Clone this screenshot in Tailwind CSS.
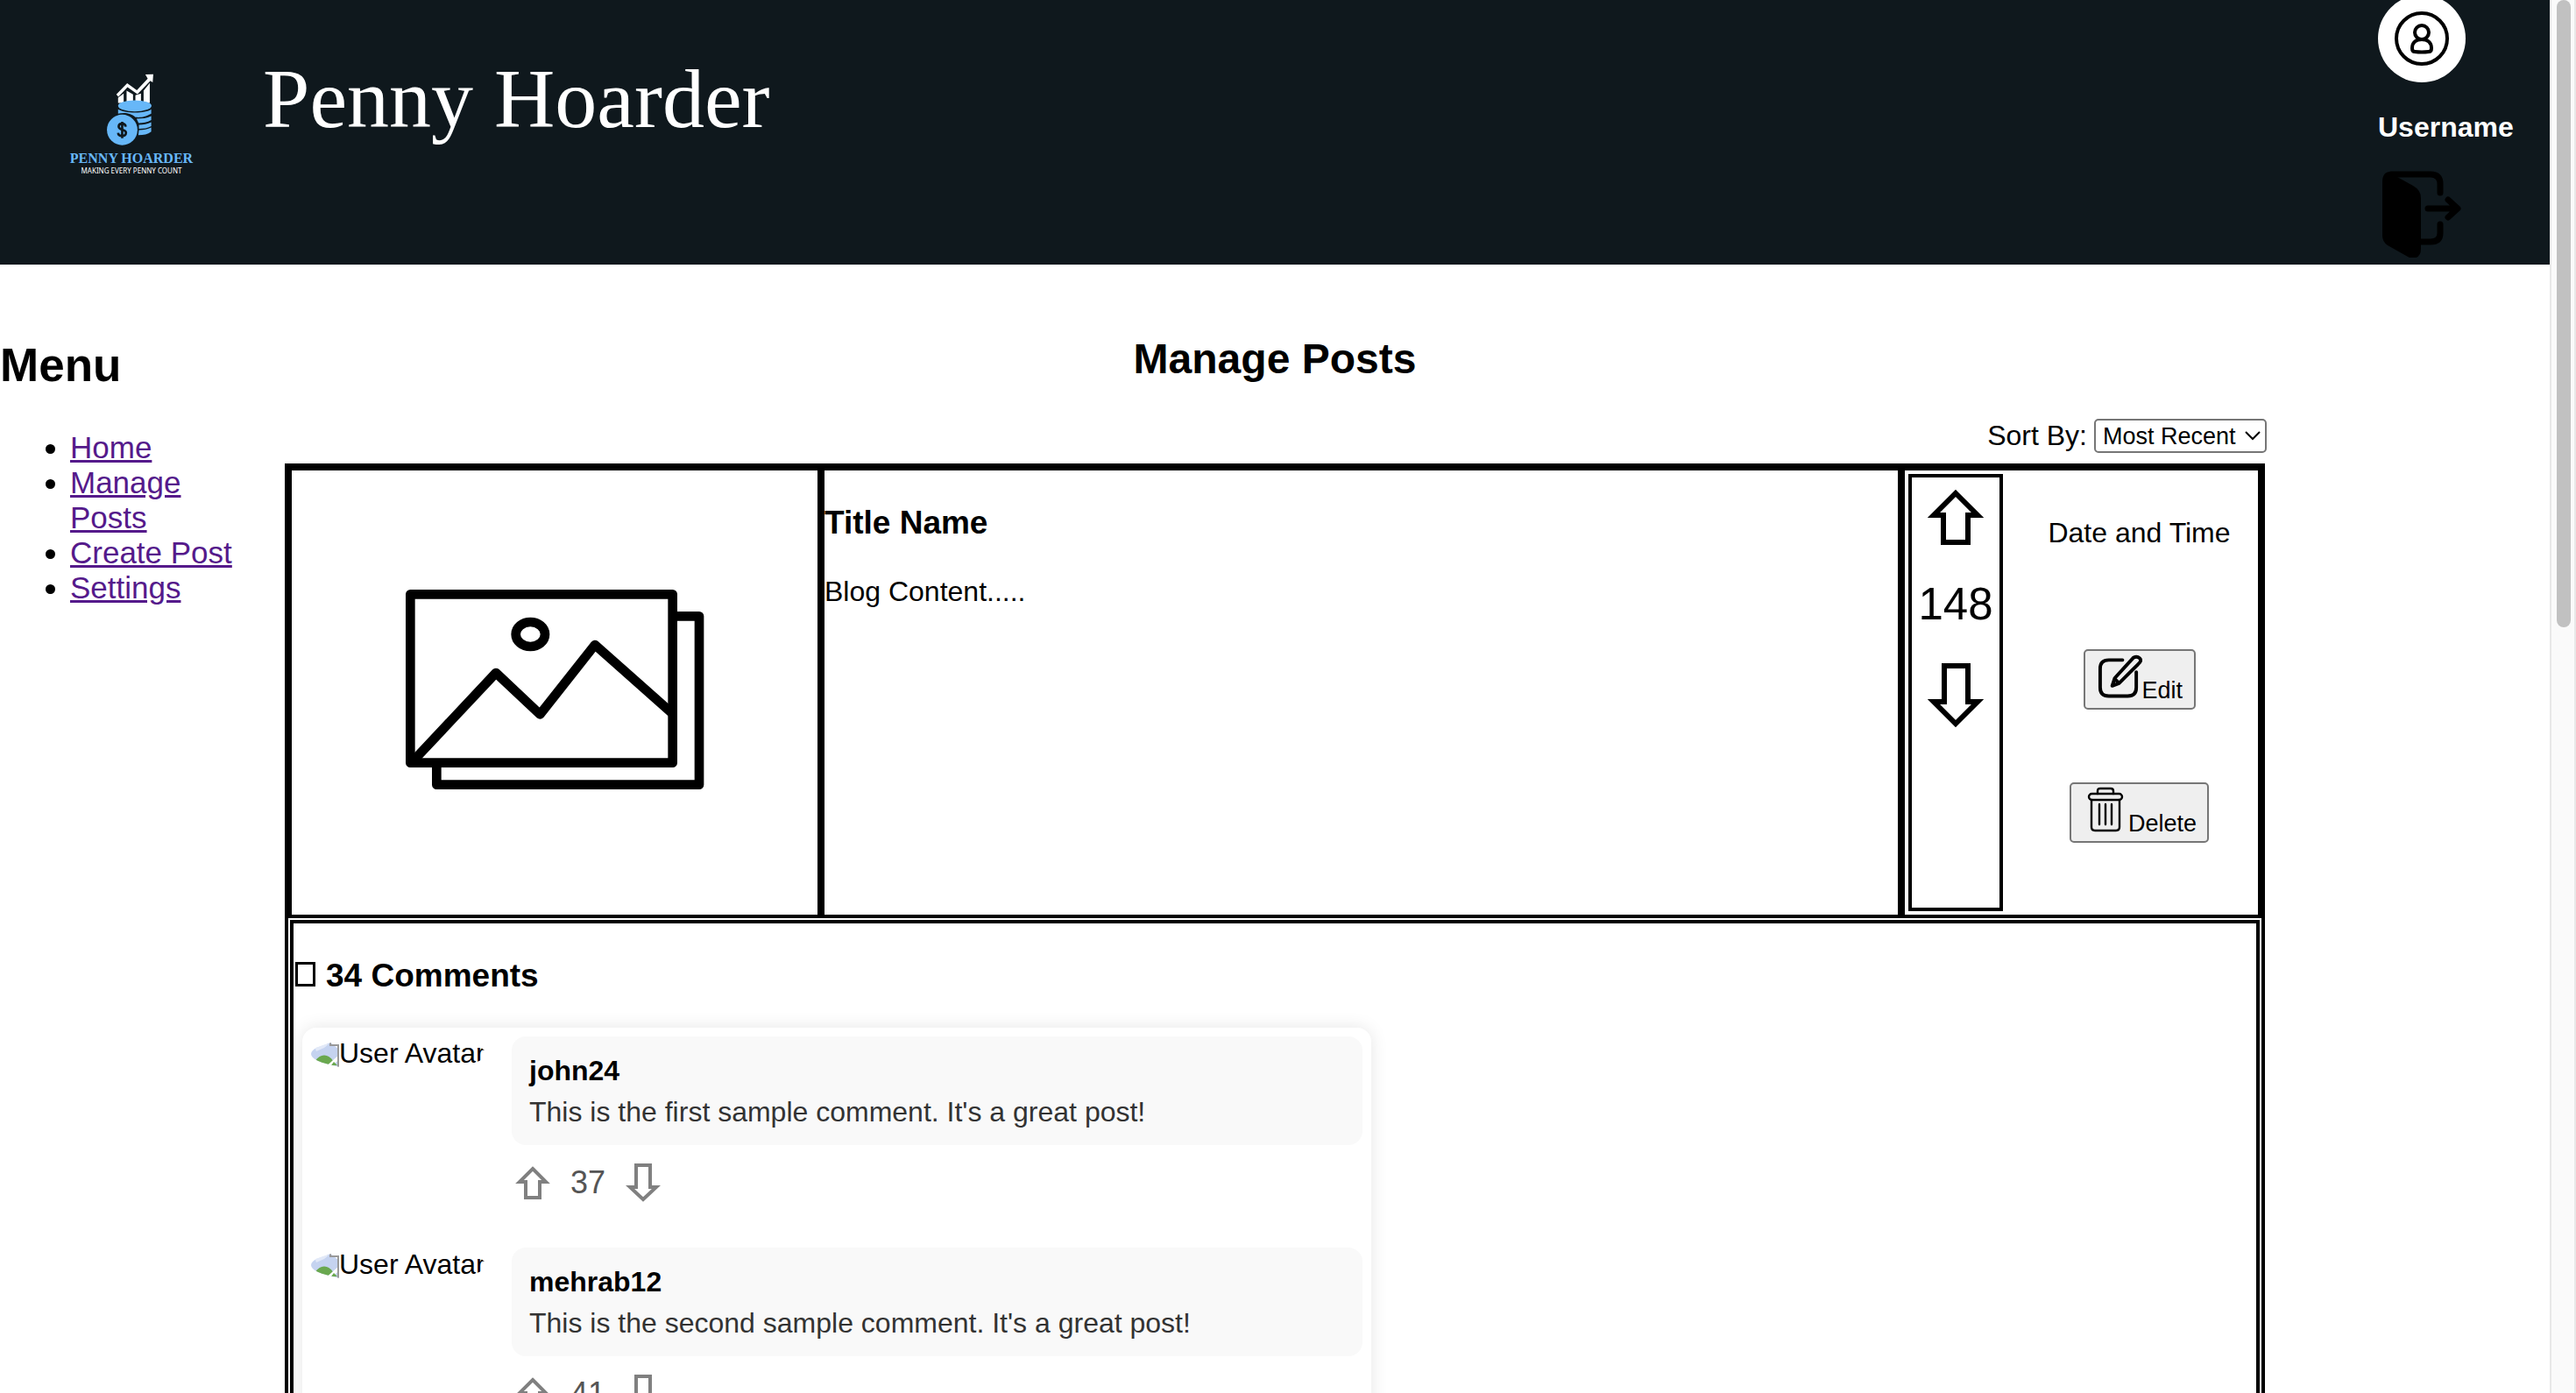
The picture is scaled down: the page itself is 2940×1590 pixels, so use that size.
<!DOCTYPE html>
<html lang="en">
<head>
<meta charset="utf-8">
<title>Penny Hoarder</title>
<script src="https://cdn.jsdelivr.net/npm/@tailwindcss/browser@4"></script>
</head>
<body class="flex h-screen overflow-hidden bg-white font-['Liberation_Sans',Arial,sans-serif] text-[32px] leading-[37px] text-black">
<svg class="hidden" aria-hidden="true">
  <symbol id="photo" viewBox="0 0 32 32">
    <path d="M0 3H22L31 10V31H0Z" fill="#c5d3f0"/>
    <path d="M3 5H20L15 9 6 13Z" fill="#fff" opacity=".5"/>
    <path d="M3 28C8 14 22 14 27 28Z" fill="#6aa84f"/>
    <path d="M15 32 32 17v5L22 32Z" fill="#fff"/>
    <path d="M22 3V6H31V31" fill="none" stroke="#999" stroke-width="2"/>
    <path d="M23 29l3-4 4 4Z" fill="#6aa84f"/>
  </symbol>
</svg>
<div class="min-w-0 flex-1 overflow-hidden">
  <header class="flex h-[302px] items-start bg-[#0f181d] text-white">
    <a href="#" class="flex w-[300px] flex-col items-center pt-[84px]">
      <svg class="mr-1 h-[82px] w-[53px]" viewBox="244 100 158 245" aria-hidden="true">
        <g fill="#fff">
          <path d="M282 182 301 168V200H282ZM311 158 333 171V200H311ZM341 174 360 168V200H341ZM369 158 390 132V200H369Z"/>
          <path d="M375 103 402 102 400 130 392 125 348 170 314 146 283 179 276 171 313 133 346 157 383 117Z"/>
        </g>
        <g fill="#67b7f8">
          <ellipse cx="339" cy="210" rx="57" ry="19"/>
          <path d="M282 222c20 14 92 16 113 0v15c-22 12-34 13-54 12-12-14-40-18-59-12Z"/>
          <path d="M345 254c18 0 36-2 50-9v13c-14 8-28 10-43 11ZM353 275c15 0 30-3 42-9v13c-14 7-26 9-42 9ZM353 293c15 0 30-3 42-9v14c-12 9-26 12-44 12Z"/>
          <circle cx="296" cy="292" r="52"/>
        </g>
        <path d="M308 281c-2-14-24-13-24 0 0 13 25 8 25 21 0 15-26 14-27 0M296 264v56" fill="none" stroke="#0f181d" stroke-width="8"/>
      </svg>
      <span class="mt-[6px] font-['Liberation_Serif',serif] text-[16px] leading-[18px] font-bold text-[#67b7f8]">PENNY HOARDER</span>
      <span class="font-['Noto_Sans',sans-serif] text-[8px] leading-[9px]">MAKING EVERY PENNY COUNT</span>
    </a>
    <h1 class="pt-[58px] font-['Liberation_Serif','Times_New_Roman',serif] text-[96px] leading-[110px]">Penny Hoarder</h1>
    <div class="ml-auto flex w-[196px] flex-col items-start">
      <svg class="-mt-[6px] size-[100px]" viewBox="0 0 100 100" fill="none" stroke="#000" stroke-width="4" aria-label="Profile">
        <circle cx="50" cy="50" r="50" fill="#fff" stroke="none"/>
        <circle cx="50" cy="50" r="29"/>
        <circle cx="50" cy="43" r="8"/>
        <path d="M39 61c0-6 4-10 11-10s11 4 11 10c0 3-1 4-3 4q-8 1-16 0c-2 0-3-1-3-4Z"/>
      </svg>
      <p class="mt-[33px] font-bold">Username</p>
      <button class="mt-7" aria-label="Log out">
        <svg class="block h-[102px] w-[100px]" viewBox="0 0 100 102" fill="none" stroke="#000" stroke-width="7" stroke-linecap="round" stroke-linejoin="round">
          <path d="M15 7H60Q71 7 71 18V28M71 64V74Q71 84 60 84H46M57 46H88M80 36 91 46 80 56"/>
          <path d="M5 16Q5 4 14 4L22 10 40 20Q49 25 49 34V92Q49 103 38 103L34 101 11 88Q5 84 5 77Z" fill="#000" stroke="none"/>
        </svg>
      </button>
    </div>
  </header>

  <div class="grid grid-cols-[325px_minmax(0,1fr)_325px]">
    <nav class="pt-[85px]">
      <h2 class="text-[53px] leading-[60px] font-bold">Menu</h2>
      <ul class="mt-11 list-disc pr-[50px] pl-20 text-[35px] leading-[40px]">
        <li><a href="#" class="text-[#551a8b] underline">Home</a></li>
        <li><a href="#" class="text-[#551a8b] underline">Manage Posts</a></li>
        <li><a href="#" class="text-[#551a8b] underline">Create Post</a></li>
        <li><a href="#" class="text-[#551a8b] underline">Settings</a></li>
      </ul>
    </nav>

    <main class="pt-20">
      <h2 class="text-center text-[48px] leading-[56px] font-bold">Manage Posts</h2>
      <div class="-mr-[2px] mt-10 mb-3 flex items-center justify-end gap-2">
        <label for="sort">Sort By:</label>
        <span class="relative flex">
          <select id="sort" class="h-[39px] w-[197px] appearance-none rounded-[5px] border-2 border-[#767676] bg-white pl-2 text-[27px] leading-[30px]"><option>Most Recent</option><option>Oldest</option></select>
          <svg class="pointer-events-none absolute top-[13px] right-[7px] h-3 w-[18px]" viewBox="0 0 18 12" fill="none" stroke="#000" stroke-width="2"><path d="M1 2 9 10 17 2"/></svg>
        </span>
      </div>

      <article class="border-4 border-black">
        <div class="grid h-[515px] grid-cols-[608px_minmax(0,1fr)_411px]">
          <div class="flex items-center justify-center border-4 border-r-0 border-black pr-1 pb-2">
            <svg class="h-[228px] w-[342px]" viewBox="126 99 1026 684" fill="none" stroke="#000" aria-label="Post image">
              <g stroke-width="32" stroke-linejoin="round">
                <path d="M1045 190H1134V767H235V692"/>
                <path d="M145 115H1043V692H145Z"/>
                <path d="M160 680 438 384 589 526 777 288 1040 521"/>
              </g>
              <ellipse cx="556" cy="252" rx="50" ry="42" stroke-width="32"/>
            </svg>
          </div>
          <div class="-ml-1 border-y-4 border-r-4 border-l-8 border-black pt-[38px]">
            <h3 class="text-[37px] leading-[43px] font-bold">Title Name</h3>
            <p class="mt-[39px]">Blog Content.....</p>
          </div>
          <div class="flex border-4 border-black">
            <div class="my-1 ml-1 flex w-[108px] shrink-0 flex-col items-center border-4 border-black pt-[14px]">
              <button aria-label="Upvote post"><svg class="block h-[63px] w-[66px]" viewBox="0 0 66 63" fill="none" stroke="#000" stroke-width="6"><path d="M33 4 58 29H47V60H19V29H8Z"/></svg></button>
              <span class="mt-[38px] text-[51px] leading-[60px]">148</span>
              <button aria-label="Downvote post" class="mt-[37px]"><svg class="block h-[73px] w-[66px]" viewBox="0 0 66 73" fill="none" stroke="#000" stroke-width="6"><path d="M33 69 58 44H47V3H20V44H8Z"/></svg></button>
            </div>
            <div class="flex flex-1 flex-col items-center pt-[53px] pl-5">
              <p>Date and Time</p>
              <button class="mt-[114px] flex h-[69px] w-[128px] items-end rounded-[5px] border-2 border-[#767676] bg-[#efefef] pb-1 pl-[13px] text-[27px] leading-[31px]">
                <svg class="mb-[6px] h-[52px] w-[52px] shrink-0" viewBox="0 0 53 52" fill="none" stroke="#000" stroke-width="4" stroke-linecap="round" stroke-linejoin="round"><path d="M30 7H14Q4 7 4 17V39Q4 49 14 49H36Q46 49 46 39V21"/><path d="M18 37 21 28 43 4Q47 2 50 5T48 12L26 34ZM21 29 26 34"/></svg>
                <span>Edit</span>
              </button>
              <button class="mt-[83px] flex h-[69px] w-[159px] items-end rounded-[5px] border-2 border-[#767676] bg-[#efefef] pb-1 pl-[17px] text-[27px] leading-[31px]">
                <svg class="mb-[6px] h-[52px] w-[48px] shrink-0" viewBox="0 0 48 52" fill="none" stroke="#000" stroke-width="2.4" stroke-linecap="round" stroke-linejoin="round"><rect x="3" y="8" width="38" height="7" rx="3.500"/><path d="M13 8V5Q13 2 16 2H28Q31 2 31 5V8M6 15V46Q6 50 10 50H34Q38 50 38 46V15M15 20V43M22 20V43M29 20V43"/></svg>
                <span>Delete</span>
              </button>
            </div>
          </div>
        </div>

        <section class="m-[2px] border-4 border-black">
          <h3 class="flex items-baseline gap-3 pt-[38px] pl-[2px] text-[37px] leading-[43px] font-bold"><span class="h-[28px] w-[23px] border-3 border-black" aria-hidden="true"></span>34 Comments</h3>
          <div class="mx-[10px] mt-[38px] mb-10 w-[1220px] rounded-2xl bg-white p-[10px] shadow-[0_0_20px_rgba(0,0,0,0.1)]">
            <div class="flex h-[241px] items-start">
              <div class="flex h-[40px] w-[200px] shrink-0 items-start overflow-hidden rounded-[50%] leading-[39px] whitespace-nowrap"><svg class="mt-1 size-8 shrink-0"><use href="#photo"/></svg>User Avatar</div>
              <div class="ml-[29px] flex-1">
                <div class="flex flex-col gap-[10px] rounded-2xl bg-[#f9f9f9] px-5 pt-[21px] pb-[19px]"><strong>john24</strong><p class="text-[#333]">This is the first sample comment. It's a great post!</p></div>
                <div class="mt-[19px] flex h-12 items-center gap-6 pl-1 text-[36px] leading-[44px] text-[#555]">
                  <button aria-label="Upvote comment"><svg class="block h-[38px] w-10" viewBox="0 0 40 38" fill="none" stroke="#808080" stroke-width="4"><path d="M20 3 35 18H28V36H12V18H5Z"/></svg></button>
                  <span class="-mx-px">37</span>
                  <button aria-label="Downvote comment"><svg class="block h-11 w-10" viewBox="0 0 40 44" fill="none" stroke="#808080" stroke-width="4"><path d="M20 41 35 27H28V2H12V27H5Z"/></svg></button>
                </div>
              </div>
            </div>
            <div class="flex h-[241px] items-start">
              <div class="flex h-[40px] w-[200px] shrink-0 items-start overflow-hidden rounded-[50%] leading-[39px] whitespace-nowrap"><svg class="mt-1 size-8 shrink-0"><use href="#photo"/></svg>User Avatar</div>
              <div class="ml-[29px] flex-1">
                <div class="flex flex-col gap-[10px] rounded-2xl bg-[#f9f9f9] px-5 pt-[21px] pb-[19px]"><strong>mehrab12</strong><p class="text-[#333]">This is the second sample comment. It's a great post!</p></div>
                <div class="mt-[19px] flex h-12 items-center gap-6 pl-1 text-[36px] leading-[44px] text-[#555]">
                  <button aria-label="Upvote comment"><svg class="block h-[38px] w-10" viewBox="0 0 40 38" fill="none" stroke="#808080" stroke-width="4"><path d="M20 3 35 18H28V36H12V18H5Z"/></svg></button>
                  <span class="-mx-px">41</span>
                  <button aria-label="Downvote comment"><svg class="block h-11 w-10" viewBox="0 0 40 44" fill="none" stroke="#808080" stroke-width="4"><path d="M20 41 35 27H28V2H12V27H5Z"/></svg></button>
                </div>
              </div>
            </div>
          </div>
        </section>
      </article>
    </main>
  </div>
</div>
<div class="flex h-full w-[30px] shrink-0 justify-center border-x-2 border-[#e8e8e8] bg-[#fafafa] pl-[2px]" aria-hidden="true">
  <div class="h-[45%] w-4 rounded-full bg-[#c1c1c1]"></div>
</div>
</body>
</html>
